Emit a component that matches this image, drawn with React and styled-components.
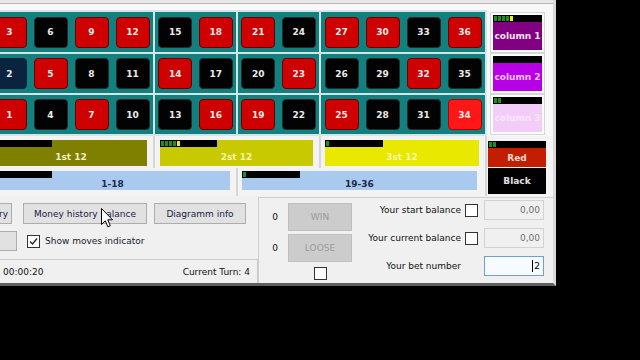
import React from "react"
import styled, { createGlobalStyle } from "styled-components"

const RED = new Set([1, 3, 5, 7, 9, 12, 14, 16, 18, 19, 21, 23, 25, 27, 30, 32, 34, 36]);

// column index ranges of each board group
const GROUPS = [[0, 4], [4, 6], [6, 8], [8, 12]];

const GlobalStyle = createGlobalStyle`
  html, body {
    margin: 0;
    padding: 0;
    background: #000;
  }
  body {
    width: 640px;
    height: 360px;
    overflow: hidden;
    font-family: "DejaVu Sans", "Liberation Sans", sans-serif;
    font-size: 9px;
  }
`

const Window = styled.div`
  position: relative;
  margin-left: -80px;
  width: 636px;
  box-sizing: border-box;
  background: #f0f0f0;
  border-right: 3px solid #d9d9d9;
  border-bottom: 3px solid #5e5e5e;
  display: flex;
  flex-direction: column;
`

const TopStrip = styled.div`
  height: 3px;
  background: #e8e8e8;
  border-bottom: 1px solid #b8b8b8;
`

const TopArea = styled.div`
  display: flex;
  padding-top: 6px;
  background: #f8f8f8;
`

const Board = styled.div`
  display: grid;
  grid-template-columns: 67px 164px 81px 81px 164px;
  grid-template-rows: 40px 39px 39px;
  gap: 2px;
  padding: 2px 2px 2px 0;
  background: #d3e6e6;
`

const Group = styled.div`
  background: #12807f;
  display: grid;
  grid-template-columns: repeat(${p => p.$cols}, 1fr);
  justify-items: center;
  align-items: center;
  grid-row: ${p => p.$span ? "1 / span 3" : "auto"};
`

const Cell = styled.div`
  width: 34px;
  height: 31px;
  box-sizing: border-box;
  border-radius: 4px;
  background: ${p => p.$bg};
  border: 1px solid ${p => p.$edge};
  color: #ececec;
  font-weight: bold;
  font-size: 9px;
  display: flex;
  align-items: center;
  justify-content: center;
`

const SidePanel = styled.div`
  width: 66px;
  display: flex;
  flex-direction: column;
  gap: 6px;
  padding-top: 5px;
  background: #f8f8f8;
`

const ColumnBox = styled.div`
  margin-left: 6px;
  width: 49px;
  height: 35px;
  display: flex;
  flex-direction: column;
  background: ${p => p.$bg};
  color: ${p => p.$fg};
  box-shadow: 0 0 0 2px #fcfcfc, 0 0 0 3px #d6d6d6;
`

const BetLabel = styled.div`
  flex: 1;
  display: flex;
  align-items: center;
  justify-content: center;
  font-weight: bold;
  font-size: 9px;
  color: ${p => p.$fg};
`

const Bar = styled.div`
  flex: none;
  width: ${p => p.$w ? `${p.$w}px` : "100%"};
  height: 7px;
  box-sizing: border-box;
  padding: 1px;
  background: #000;
  display: flex;
  gap: 1px;
`

const Pip = styled.span`
  width: 3px;
  height: 5px;
  background: ${p => p.$yellow ? "#f2f200" : "#1f8f1f"};
`

const BetsRow = styled.div`
  display: flex;
  height: ${p => p.$h}px;
  background: #f3f3f3;
`

const Slot = styled.div`
  width: ${p => p.$w}px;
  flex: none;
  box-sizing: border-box;
  padding: ${p => p.$pad};
  border-left: ${p => p.$line ? "2px solid #d6d6d6" : "none"};
`

const BetBox = styled.div`
  height: ${p => p.$h}px;
  display: flex;
  flex-direction: column;
  background: ${p => p.$bg};
`

const Bottom = styled.div`
  display: flex;
  height: 87px;
`

const LeftPart = styled.div`
  width: 338px;
  display: flex;
  flex-direction: column;
`

const ButtonRow = styled.div`
  display: flex;
  align-items: center;
  padding-left: 35px;
  margin-top: ${p => p.$top}px;
  gap: ${p => p.$gap}px;
`

const Button = styled.div`
  width: ${p => p.$w}px;
  height: ${p => p.$h}px;
  box-sizing: border-box;
  background: #e1e1e1;
  border: 1px solid #adadad;
  color: #202044;
  display: flex;
  align-items: center;
  justify-content: center;
  white-space: nowrap;
  overflow: hidden;
`

const CheckLabel = styled.label`
  display: flex;
  align-items: center;
  gap: 5px;
  margin-left: 10px;
  color: #1a1a2e;
`

const Check = styled.span`
  width: 13px;
  height: 13px;
  box-sizing: border-box;
  background: #fff;
  border: 1px solid #333;
  display: flex;
  align-items: center;
  justify-content: center;
  flex: none;
`

const StatusBar = styled.div`
  margin-top: auto;
  height: 23px;
  display: flex;
  align-items: center;
  border-top: 1px solid #cacaca;
  border-right: 1px solid #cacaca;
  color: #111;
`

const StatusCell = styled.div`
  width: ${p => p.$w ? `${p.$w}px` : "auto"};
  flex: ${p => p.$grow ? 1 : "none"};
  padding-right: ${p => p.$pr || 0}px;
  text-align: ${p => p.$right ? "right" : "left"};
`

const GroupBox = styled.div`
  flex: 1;
  margin-top: 1px;
  border-left: 1px solid #cfcfcf;
  border-top: 1px solid #cfcfcf;
  display: flex;
`

const ScoreGrid = styled.div`
  display: grid;
  grid-template-columns: 29px 64px;
  grid-template-rows: 28px 28px 16px;
  row-gap: 3px;
  padding-top: 5px;
  align-items: center;
  justify-items: center;
`

const Score = styled.div`
  color: #111;
  padding-left: 3px;
`

const DisabledButton = styled.div`
  width: 64px;
  height: 28px;
  box-sizing: border-box;
  background: #cccccc;
  border: 1px solid #bfbfbf;
  color: #9b9b9b;
  display: flex;
  align-items: center;
  justify-content: center;
`

const Form = styled.div`
  flex: 1;
  padding-top: 2px;
  display: flex;
  flex-direction: column;
  gap: 8px;
`

const FormRow = styled.div`
  display: flex;
  align-items: center;
  height: 20px;
`

const FormLabel = styled.div`
  flex: 1;
  text-align: right;
  color: #111;
`

const CheckSlot = styled.div`
  width: 13px;
  margin: 0 6px 0 4px;
  flex: none;
`

const Input = styled.div`
  width: 60px;
  height: 20px;
  margin-right: 9px;
  box-sizing: border-box;
  background: ${p => p.$focus ? "#f5fbff" : "#f0f0f0"};
  border: 1px solid ${p => p.$focus ? "#6f9fd6" : "#d2d2d2"};
  color: ${p => p.$focus ? "#000" : "#707070"};
  display: flex;
  align-items: center;
  justify-content: flex-end;
  padding-right: 3px;
`

const Caret = styled.span`
  width: 1px;
  height: 12px;
  background: #000;
  margin-right: 1px;
`

const Pointer = styled.svg`
  position: absolute;
  left: 181px;
  top: 208px;
`

const Indicator = ({ green = 0, yellow = false, w }) => (
  <Bar $w={ w }>
    { Array.from({ length: green }, (_, i) => <Pip key={ i }/>) }
    { yellow ? <Pip $yellow/> : null }
  </Bar>
)

const numberAt = (row, col) => col * 3 + (3 - row);

const cellColors = n => {
  if (n === 2) return ["#0a2440", "#0a2440"];
  if (n === 34) return ["#ff1616", "#b00000"];
  if (RED.has(n)) return ["#cf0000", "#6a0000"];
  return ["#030303", "#2a2a2a"];
}

const COLUMNS = [
  { label: "column 1", bg: "#820082", fg: "#f4e4f4", green: 4, yellow: true },
  { label: "column 2", bg: "#b800e6", fg: "#f6c8fa", green: 0 },
  { label: "column 3", bg: "#f2cdf8", fg: "#fae6fd", green: 2 },
];

const App = () => {
  return (
    <>
      <GlobalStyle/>
      <Window>
        <TopStrip/>
        <TopArea>
          <Board>
            <Group $cols={ 1 } $span>
              <Cell $bg="#0a8a0a" $edge="#055005">0</Cell>
            </Group>
            { [0, 1, 2].map(row =>
                GROUPS.map(([from, to]) =>
                  <Group key={ `${ row }-${ from }` } $cols={ to - from }>
                    { Array.from({ length: to - from }, (_, i) => {
                        const n = numberAt(row, from + i);
                        const [bg, edge] = cellColors(n);
                        return <Cell key={ n } $bg={ bg } $edge={ edge }>{ n }</Cell>
                      })
                    }
                  </Group>
                )
              )
            }
          </Board>
          <SidePanel>
            { COLUMNS.map(c =>
                <ColumnBox key={ c.label } $bg={ c.bg }>
                  <Indicator green={ c.green } yellow={ c.yellow }/>
                  <BetLabel $fg={ c.fg }>{ c.label }</BetLabel>
                </ColumnBox>
              )
            }
          </SidePanel>
        </TopArea>

        <BetsRow $h={ 32 }>
          <Slot $w={ 69 }/>
          <Slot $w={ 164 } $pad="4px 6px 0 6px">
            <BetBox $h={ 26 } $bg="#808000">
              <Indicator w={ 57 }/>
              <BetLabel $fg="#f0eec4">1st 12</BetLabel>
            </BetBox>
          </Slot>
          <Slot $w={ 166 } $line $pad="4px 6px 0 5px">
            <BetBox $h={ 26 } $bg="#c9c900">
              <Indicator w={ 57 } green={ 4 } yellow/>
              <BetLabel $fg="#f6f4a6">2st 12</BetLabel>
            </BetBox>
          </Slot>
          <Slot $w={ 166 } $line $pad="4px 6px 0 4px">
            <BetBox $h={ 26 } $bg="#e8e800">
              <Indicator w={ 58 } green={ 1 }/>
              <BetLabel $fg="#f8f6a0">3st 12</BetLabel>
            </BetBox>
          </Slot>
          <Slot $w={ 68 } $line $pad="5px 7px 0 1px">
            <BetBox $h={ 26 } $bg="#c41e00">
              <Indicator green={ 2 }/>
              <BetLabel $fg="#f6dcd6">Red</BetLabel>
            </BetBox>
          </Slot>
        </BetsRow>

        <BetsRow $h={ 28 }>
          <Slot $w={ 69 }/>
          <Slot $w={ 247 } $pad="3px 6px 0 6px">
            <BetBox $h={ 19 } $bg="#a9c9ef">
              <Indicator w={ 57 }/>
              <BetLabel $fg="#1c2a48">1-18</BetLabel>
            </BetBox>
          </Slot>
          <Slot $w={ 249 } $line $pad="3px 8px 0 4px">
            <BetBox $h={ 19 } $bg="#a9c9ef">
              <Indicator w={ 58 } green={ 1 }/>
              <BetLabel $fg="#1c2a48">19-36</BetLabel>
            </BetBox>
          </Slot>
          <Slot $w={ 68 } $line $pad="0 7px 0 1px">
            <BetBox $h={ 26 } $bg="#000">
              <BetLabel $fg="#e2e2e2">Black</BetLabel>
            </BetBox>
          </Slot>
        </BetsRow>

        <Bottom>
          <LeftPart>
            <ButtonRow $top={ 7 } $gap={ 11 }>
              <Button $w={ 57 } $h={ 21 }>Bet history</Button>
              <Button $w={ 124 } $h={ 21 }>Money history balance</Button>
              <Button $w={ 92 } $h={ 21 } style={ { marginLeft: -4 } }>Diagramm info</Button>
            </ButtonRow>
            <ButtonRow $top={ 7 } $gap={ 0 }>
              <Button $w={ 62 } $h={ 20 }>Reset</Button>
              <CheckLabel>
                <Check>
                  <svg width="9" height="9" viewBox="0 0 9 9">
                    <path d="M1 4.5 L3.5 7 L8 1.5" fill="none" stroke="#222" strokeWidth="1.3"/>
                  </svg>
                </Check>
                Show moves indicator
              </CheckLabel>
            </ButtonRow>
            <StatusBar>
              <StatusCell $w={ 83 }>Ready</StatusCell>
              <StatusCell $grow>00:00:20</StatusCell>
              <StatusCell $right $pr={ 7 }>Current Turn: 4</StatusCell>
            </StatusBar>
          </LeftPart>

          <GroupBox>
            <ScoreGrid>
              <Score>0</Score>
              <DisabledButton>WIN</DisabledButton>
              <Score>0</Score>
              <DisabledButton>LOOSE</DisabledButton>
              <span/>
              <Check/>
            </ScoreGrid>
            <Form>
              <FormRow>
                <FormLabel>Your start balance</FormLabel>
                <CheckSlot><Check/></CheckSlot>
                <Input>0,00</Input>
              </FormRow>
              <FormRow>
                <FormLabel>Your current balance</FormLabel>
                <CheckSlot><Check/></CheckSlot>
                <Input>0,00</Input>
              </FormRow>
              <FormRow>
                <FormLabel>Your bet number</FormLabel>
                <CheckSlot/>
                <Input $focus><Caret/>2</Input>
              </FormRow>
            </Form>
          </GroupBox>
        </Bottom>

        <Pointer width="13" height="21" viewBox="0 0 13 21">
          <path d="M0.5 0.5 L0.5 16.5 L4.3 12.8 L6.8 18.8 L9.3 17.8 L6.8 11.8 L11.5 11.8 Z"
            fill="#fff" stroke="#000" strokeWidth="1"/>
        </Pointer>
      </Window>
    </>
  )
}

export default App
